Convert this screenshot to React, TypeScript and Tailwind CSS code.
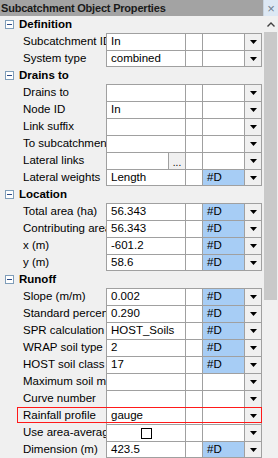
type Row = {
  label: string;
  value?: string;
  d?: boolean;
  kind?: "dots" | "check";
  highlight?: boolean;
};

type Section = { title: string; rows: Row[] };

const sections: Section[] = [
  {
    title: "Definition",
    rows: [
      { label: "Subcatchment ID", value: "In" },
      { label: "System type", value: "combined" },
    ],
  },
  {
    title: "Drains to",
    rows: [
      { label: "Drains to" },
      { label: "Node ID", value: "In" },
      { label: "Link suffix" },
      { label: "To subcatchment" },
      { label: "Lateral links", kind: "dots" },
      { label: "Lateral weights", value: "Length", d: true },
    ],
  },
  {
    title: "Location",
    rows: [
      { label: "Total area (ha)", value: "56.343", d: true },
      { label: "Contributing area (ha)", value: "56.343", d: true },
      { label: "x (m)", value: "-601.2", d: true },
      { label: "y (m)", value: "58.6", d: true },
    ],
  },
  {
    title: "Runoff",
    rows: [
      { label: "Slope (m/m)", value: "0.002", d: true },
      { label: "Standard percentage runoff", value: "0.290", d: true },
      { label: "SPR calculation", value: "HOST_Soils", d: true },
      { label: "WRAP soil type", value: "2", d: true },
      { label: "HOST soil class", value: "17", d: true },
      { label: "Maximum soil moisture" },
      { label: "Curve number" },
      { label: "Rainfall profile", value: "gauge", highlight: true },
      { label: "Use area-averaged rainfall", kind: "check" },
      { label: "Dimension (m)", value: "423.5", d: true },
    ],
  },
];

function Caret() {
  return (
    <svg width="7" height="4" viewBox="0 0 7 4">
      <path d="M0 0h7L3.5 4z" fill="#000" />
    </svg>
  );
}

function Minus() {
  return (
    <div className="flex h-[9px] w-[9px] items-center justify-center border border-[#7f9db9] bg-white">
      <div className="h-px w-[5px] bg-[#2b4a86]" />
    </div>
  );
}

function FieldRow({ row, last }: { row: Row; last: boolean }) {
  return (
    <div className="relative flex h-[17px]">
      <div className="w-[106px] overflow-hidden whitespace-nowrap pl-[23px] leading-[17px]">
        {row.label}
      </div>
      <div
        className={`flex h-[17px] border-t border-r border-[#a0a0a0] ${last ? "border-b" : ""}`}
      >
        <div className="flex w-[79px] border-l border-[#a0a0a0] bg-white">
          {row.kind === "dots" ? (
            <>
              <div className="flex-1" />
              <div className="flex w-[17px] items-end justify-center border-l border-[#a0a0a0] bg-[#f0f0f0] text-[10px] leading-[12px]">
                ...
              </div>
            </>
          ) : row.kind === "check" ? (
            <div className="flex flex-1 items-center justify-center">
              <div className="h-[11px] w-[11px] border border-black bg-white" />
            </div>
          ) : (
            <div className="flex-1 overflow-hidden whitespace-nowrap pl-[4px] leading-[15px]">
              {row.value}
            </div>
          )}
        </div>
        <div className="w-[17px] border-l border-[#a0a0a0] bg-white" />
        <div
          className={`w-[42px] border-l border-[#a0a0a0] pl-[4px] leading-[15px] ${row.d ? "bg-[#a7cdf5]" : "bg-white"}`}
        >
          {row.d ? "#D" : ""}
        </div>
        <div className="flex w-[17px] items-center justify-center border-l border-[#a0a0a0] bg-[#f0f0f0]">
          <Caret />
        </div>
      </div>
      {row.highlight && (
        <div className="absolute left-[17px] top-0 z-10 h-[16px] w-[245px] border border-[#ff1a1a]" />
      )}
    </div>
  );
}

export default function App() {
  return (
    <div
      className="flex h-[458px] w-[278px] flex-col overflow-hidden bg-[#f0f0f0] text-[11.5px] text-black"
      style={{ fontFamily: '"Liberation Sans", Arial, sans-serif' }}
    >
      <div className="flex h-[16px] shrink-0 bg-[#a3a3a3]">
        <div className="flex-1 pl-[1px] text-[11px] font-bold leading-[16px] tracking-[-0.2px] text-[#1a1a1a]">
          Subcatchment Object Properties
        </div>
        <div className="flex w-[15px] items-center justify-center border-l border-[#c8d4e0] bg-[#dde8f4] text-[13px] leading-none text-[#6e7f91]">
          ×
        </div>
      </div>
      <div className="flex flex-1">
        <div className="flex w-[263px] flex-col">
          {sections.map((s) => (
            <div key={s.title}>
              <div className="flex h-[17px] items-center gap-[5px] pl-[5px]">
                <Minus />
                <span className="font-bold leading-[17px]">{s.title}</span>
              </div>
              {s.rows.map((r, i) => (
                <FieldRow key={r.label} row={r} last={i === s.rows.length - 1} />
              ))}
            </div>
          ))}
        </div>
        <div className="flex w-[15px] flex-col bg-[#f0f0f0]">
          <div className="flex h-[16px] items-center justify-center">
            <svg width="8" height="5" viewBox="0 0 8 5">
              <path d="M0.5 4.5L4 1l3.5 3.5" fill="none" stroke="#404040" strokeWidth="1.4" />
            </svg>
          </div>
          <div className="mx-[1px] h-[268px] bg-[#c9c9c9]" />
        </div>
      </div>
    </div>
  );
}
